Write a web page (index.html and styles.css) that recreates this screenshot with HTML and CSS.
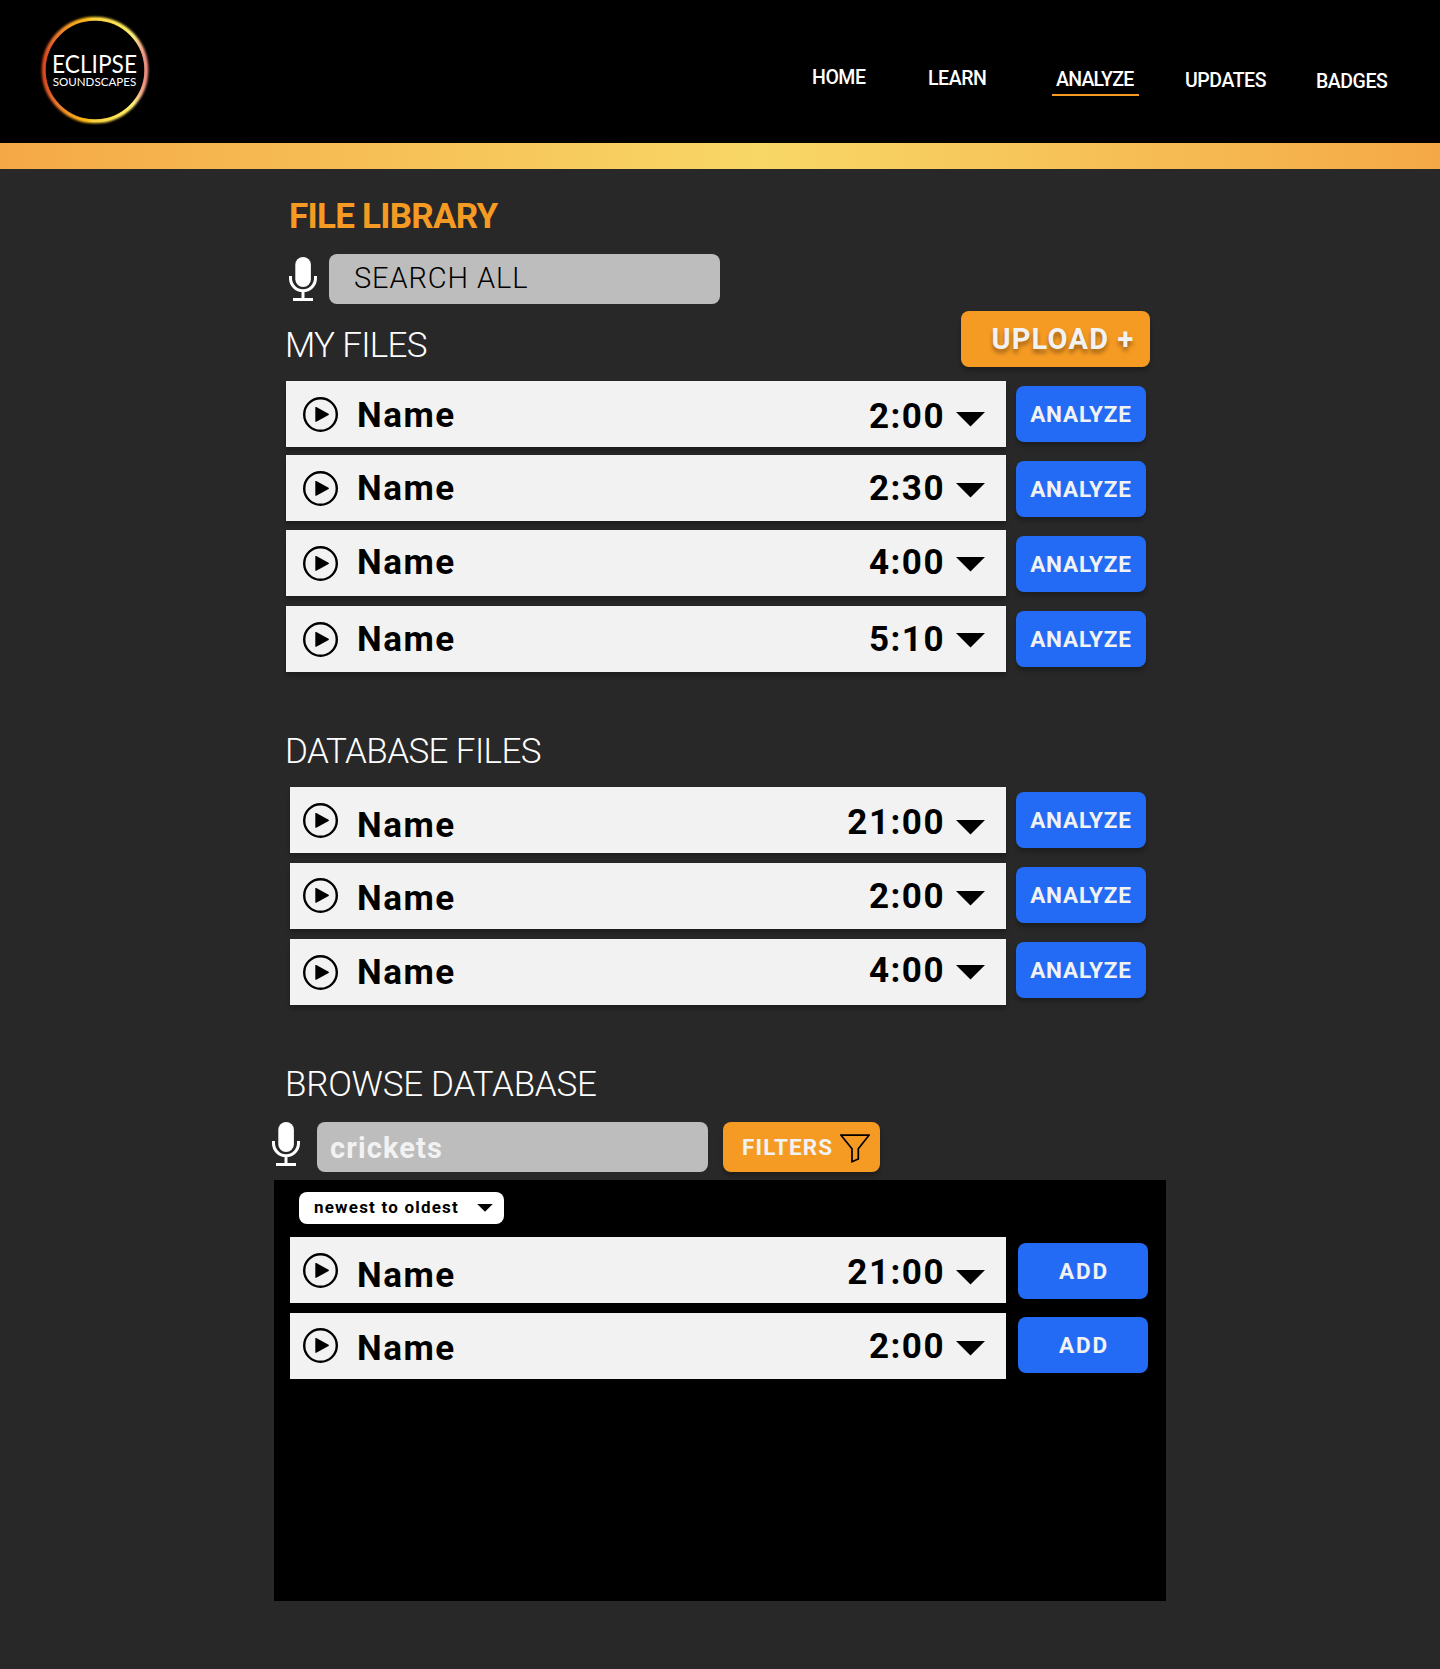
FILE: index.html
```html
<!DOCTYPE html>
<html lang="en">
<head>
<meta charset="utf-8">
<title>Eclipse Soundscapes - File Library</title>
<link rel="stylesheet" href="styles.css">
</head>
<body>
<svg class="sprite" aria-hidden="true">
  <symbol id="play" viewBox="0 0 35 35">
    <circle cx="17.5" cy="17.5" r="16.3" fill="none" stroke="#000" stroke-width="2.4"/>
    <path d="M12.3 10.6Q12.3 9.6 13.3 10.1L25.6 16.7Q26.4 17.3 25.6 17.9L13.3 24.7Q12.3 25.2 12.3 24.2Z"/>
  </symbol>
  <symbol id="caret" viewBox="0 0 29 15"><path d="M0 0H29L14.5 14.6Z"/></symbol>
  <symbol id="mic" viewBox="0 0 28 44">
    <rect x="6.3" y="0" width="15.6" height="30" rx="7.8" fill="#fff"/>
    <path d="M1.5 19V21.3A12.5 12.5 0 0 0 26.5 21.3V19M14 34.500V42" fill="none" stroke="#fff" stroke-width="3"/>
    <path d="M4 41H24V44H4Z" fill="#fff"/>
  </symbol>
</svg>
<header class="header">
  <svg class="logo" width="112" height="112" viewBox="0 0 112 112">
    <defs>
      <linearGradient id="corona" x1="0" y1="0" x2="1" y2="0">
        <stop offset="0" stop-color="#d9491f"/><stop offset=".08" stop-color="#e4672a"/>
        <stop offset=".25" stop-color="#f29a22"/><stop offset=".42" stop-color="#fdb913"/>
        <stop offset=".47" stop-color="#fbd03b"/><stop offset=".8" stop-color="#fde75c"/>
        <stop offset=".88" stop-color="#fbef7c"/><stop offset=".94" stop-color="#f6b78c"/>
        <stop offset="1" stop-color="#ec8a7e"/>
      </linearGradient>
      <filter id="glow" x="-10%" y="-10%" width="120%" height="120%"><feGaussianBlur stdDeviation=".9"/></filter>
    </defs>
    <circle cx="56" cy="56" r="51.300" fill="none" stroke="url(#corona)" stroke-width="4" filter="url(#glow)"/>
    <circle cx="56" cy="56" r="49.300" fill="#000"/>
    <circle cx="56" cy="56" r="50.700" fill="none" stroke="url(#corona)" stroke-width="2.400"/>
    <text class="logo-big" x="13" y="58.700" textLength="85" lengthAdjust="spacingAndGlyphs">ECLIPSE</text>
    <text class="logo-small" x="13.700" y="72.400" textLength="83.500" lengthAdjust="spacingAndGlyphs">SOUNDSCAPES</text>
  </svg>
  <nav class="nav">
    <a class="home">HOME</a>
    <a class="learn">LEARN</a>
    <a class="analyze">ANALYZE</a>
    <a class="updates">UPDATES</a>
    <a class="badges">BADGES</a>
  </nav>
</header>
<div class="stripe"></div>
<main class="main">
  <h1>FILE LIBRARY</h1>
  <div class="search">
    <svg class="mic"><use href="#mic"/></svg>
    <div class="field all">SEARCH ALL</div>
  </div>
  <div class="section-head">
    <h2 class="my">MY FILES</h2>
    <button class="btn upload">UPLOAD +</button>
  </div>
  <div class="list mine">
    <div class="row"><div class="bar"><svg class="play"><use href="#play"/></svg><span class="name">Name</span><span class="time">2:00</span><svg class="caret"><use href="#caret"/></svg></div><button class="btn">ANALYZE</button></div>
    <div class="row"><div class="bar"><svg class="play"><use href="#play"/></svg><span class="name">Name</span><span class="time">2:30</span><svg class="caret"><use href="#caret"/></svg></div><button class="btn">ANALYZE</button></div>
    <div class="row"><div class="bar"><svg class="play"><use href="#play"/></svg><span class="name">Name</span><span class="time">4:00</span><svg class="caret"><use href="#caret"/></svg></div><button class="btn">ANALYZE</button></div>
    <div class="row"><div class="bar"><svg class="play"><use href="#play"/></svg><span class="name">Name</span><span class="time">5:10</span><svg class="caret"><use href="#caret"/></svg></div><button class="btn">ANALYZE</button></div>
  </div>
  <h2 class="database">DATABASE FILES</h2>
  <div class="list inset">
    <div class="row"><div class="bar"><svg class="play"><use href="#play"/></svg><span class="name">Name</span><span class="time">21:00</span><svg class="caret"><use href="#caret"/></svg></div><button class="btn">ANALYZE</button></div>
    <div class="row"><div class="bar"><svg class="play"><use href="#play"/></svg><span class="name">Name</span><span class="time">2:00</span><svg class="caret"><use href="#caret"/></svg></div><button class="btn">ANALYZE</button></div>
    <div class="row"><div class="bar"><svg class="play"><use href="#play"/></svg><span class="name">Name</span><span class="time">4:00</span><svg class="caret"><use href="#caret"/></svg></div><button class="btn">ANALYZE</button></div>
  </div>
  <h2 class="browse">BROWSE DATABASE</h2>
  <div class="search browse-search">
    <svg class="mic"><use href="#mic"/></svg>
    <div class="field query">crickets</div>
    <button class="btn filters">FILTERS
      <svg width="30" height="29" viewBox="0 0 30 29"><path d="M1 1.200H29L18.300 14.800V25L12 27.700V14.800Z" fill="none" stroke="#000" stroke-width="1.700"/></svg>
    </button>
  </div>
  <section class="panel">
    <div class="sort">newest to oldest<svg class="sort-caret"><use href="#caret"/></svg></div>
    <div class="list inset results">
      <div class="row"><div class="bar"><svg class="play"><use href="#play"/></svg><span class="name">Name</span><span class="time">21:00</span><svg class="caret"><use href="#caret"/></svg></div><button class="btn add">ADD</button></div>
      <div class="row"><div class="bar"><svg class="play"><use href="#play"/></svg><span class="name">Name</span><span class="time">2:00</span><svg class="caret"><use href="#caret"/></svg></div><button class="btn add">ADD</button></div>
    </div>
  </section>
</main>
</body>
</html>
```
FILE: styles.css
```css
* { box-sizing: border-box; }
body {
  margin: 0;
  min-height: 1669px;
  background: #282828;
  color: #fff;
  font-family: Roboto, "Liberation Sans", sans-serif;
}
svg { display: block; flex: none; }
.sprite { position: absolute; width: 0; height: 0; }

.header {
  display: flex;
  justify-content: space-between;
  height: 143px;
  padding: 14px 53px 0 39px;
  background: #000;
}
.logo text { font-family: Lato, sans-serif; font-weight: 400; fill: #fff; }
.logo-big { font-size: 25px; }
.logo-small { font-size: 12px; }
.nav { display: flex; align-items: flex-start; padding-top: 46px; }
.nav a {
  font-size: 19.5px;
  font-weight: 500;
  line-height: 34px;
  letter-spacing: -.45px;
  white-space: nowrap;
}
.nav .home { width: 116px; margin-top: 1px; }
.nav .learn { width: 124px; margin-top: 2px; }
.nav .analyze {
  width: 87px;
  height: 33px;
  margin: 3px 46px 0 0;
  padding-left: 4px;
  border-bottom: 2px solid #f59a23;
  letter-spacing: -.75px;
}
.nav .updates { width: 131px; margin-top: 4px; }
.nav .badges { width: 71px; margin-top: 5px; }
.stripe { height: 26px; background: linear-gradient(90deg, #f5a946, #f8d766 53%, #f5a946); }

.main { width: 892px; margin: 0 auto; padding-top: 28px; }
h1, h2 { margin: 0; font-size: 35px; line-height: 40px; white-space: nowrap; }
h1 { padding-left: 15px; color: #f59a23; font-weight: 700; letter-spacing: -.75px; }
h2 { padding-left: 11px; font-weight: 300; letter-spacing: -.6px; }

.search { display: flex; height: 50px; margin-top: 17px; padding-left: 15px; }
.mic { width: 28px; height: 44px; margin: 3px 12px 0 0; }
.field { width: 391px; height: 50px; border-radius: 8px; background: #bdbdbd; font-size: 29px; white-space: nowrap; }
.all { padding-left: 25px; color: #000; font-weight: 350; line-height: 48px; letter-spacing: .9px; }
.query { padding-left: 13px; color: #f2f2f2; font-weight: 700; line-height: 52px; letter-spacing: 1.1px; }

.section-head { display: flex; justify-content: space-between; height: 77px; padding: 7px 16px 0 0; }
.my { padding-top: 15px; letter-spacing: -.7px; }
.btn {
  width: 130px;
  height: 56px;
  padding: 0;
  border: 0;
  border-radius: 8px;
  background: #236bf5;
  box-shadow: 0 4px 4px rgba(0, 0, 0, .25);
  color: #f2f2f2;
  font: 700 22.5px/56px Roboto, sans-serif;
  letter-spacing: .85px;
  text-align: center;
  white-space: nowrap;
}
.upload {
  width: 189px;
  padding-left: 15px;
  background: #f59a23;
  font-size: 29px;
  line-height: 52px;
  letter-spacing: 1.2px;
  text-shadow: 0 4px 4px rgba(0, 0, 0, .35);
}

.row { display: flex; align-items: flex-start; height: 66px; margin-top: var(--gap, 0); padding-left: 12px; }
.row .btn { margin: var(--btn, 5px) 0 0 10px; }
.bar {
  display: flex;
  align-items: flex-start;
  width: 720px;
  height: 66px;
  padding: 0 21px 0 17px;
  background: #f2f2f2;
  box-shadow: 0 4px 4px rgba(0, 0, 0, .25);
  color: #000;
  font-size: 35px;
  font-weight: 700;
  line-height: 68px;
  letter-spacing: 1.5px;
}
.play { width: 35px; height: 35px; margin: var(--play, 16px) 19px 0 0; }
.name { height: 66px; margin-top: var(--name, 0); }
.time { height: 66px; margin: var(--time, 0) 11px 0 auto; }
.caret { width: 29px; height: 15px; margin-top: var(--caret, 28px); }
.mine .row:nth-child(1) { --name: 1px; --time: 2px; --caret: 31px; }
.mine .row:nth-child(2) { --gap: 8px; --btn: 6px; }
.mine .row:nth-child(3) { --gap: 9px; --btn: 6px; --name: -1px; --time: -1px; --caret: 27px; }
.mine .row:nth-child(4) { --gap: 10px; --caret: 27px; }

.database { margin: 60px 0 15px; }
.browse { margin-top: 60px; letter-spacing: -.27px; }
.inset .row { padding-left: 16px; }
.inset .bar { width: 716px; padding-left: 13px; }
.inset .row:nth-child(1) { --name: 5px; --time: 2px; --caret: 33px; }
.inset .row:nth-child(2) { --gap: 10px; --btn: 4px; --play: 15px; --name: 2px; }
.inset .row:nth-child(3) { --gap: 10px; --btn: 3px; --time: -2px; --caret: 26px; }

.browse-search { margin-left: -2px; padding-left: 0; }
.browse-search .mic { margin: 0 17px 0 0; }
.filters {
  display: flex;
  align-items: flex-start;
  justify-content: space-between;
  width: 157px;
  height: 50px;
  margin-left: 15px;
  padding: 0 10px 0 19px;
  background: #f59a23;
  line-height: 51px;
  letter-spacing: 1.1px;
}
.filters svg { margin-top: 12px; }
.panel { height: 421px; margin-top: 8px; padding-top: 12px; background: #000; }
.sort {
  display: flex;
  justify-content: space-between;
  width: 205px;
  height: 32px;
  margin: 0 0 13px 25px;
  padding: 0 11px 0 15px;
  border-radius: 8px;
  background: #fff;
  color: #000;
  font-size: 17px;
  font-weight: 700;
  line-height: 31px;
  letter-spacing: 1.2px;
  white-space: nowrap;
}
.sort-caret { width: 16px; height: 8px; margin-top: 12px; }
.results .row .btn { margin-left: 12px; padding-left: 2px; letter-spacing: 1.8px; }
.results .row:nth-child(1) { --btn: 6px; }
```
